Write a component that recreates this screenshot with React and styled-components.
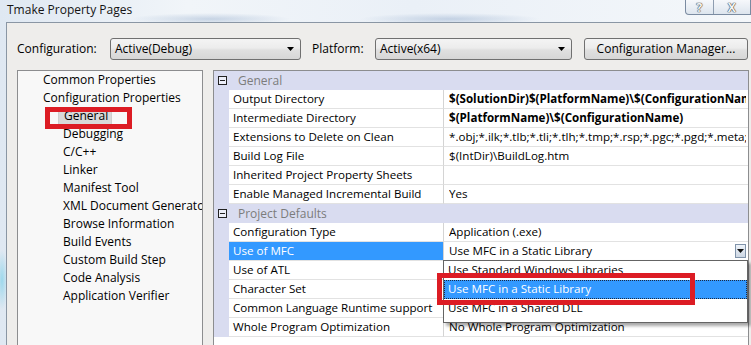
import React from 'react';
import styled, { createGlobalStyle } from 'styled-components';

const GlobalStyle = createGlobalStyle`
  html, body { margin: 0; padding: 0; background: #e8eef5; }
  body {
    font-family: "Open Sans", "Noto Sans", "DejaVu Sans", sans-serif;
    font-size: 11.6px;
    color: #000;
  }
  * { box-sizing: border-box; }
`;

const Window = styled.div`
  position: relative;
  width: 751px;
  height: 345px;
  overflow: hidden;
  display: flex;
  flex-direction: column;
  background:
    radial-gradient(ellipse 80px 6px at 210px 19px, rgba(120,150,190,0.35), transparent),
    radial-gradient(ellipse 90px 6px at 450px 19px, rgba(120,150,190,0.35), transparent),
    radial-gradient(ellipse 6px 30px at 2px 280px, rgba(90,200,230,0.5), transparent),
    linear-gradient(90deg, #dfe8f2 0%, #f1f5f9 25%, #eaf0f7 55%, #f4f7fa 100%);
`;

const TitleBar = styled.div`
  height: 22px;
  flex: none;
  display: flex;
  align-items: flex-start;
  justify-content: space-between;
`;

const Title = styled.div`
  padding: 2px 0 0 7px;
  font-size: 12px;
  line-height: 15px;
  color: #141414;
`;

const CaptionButtons = styled.div`
  display: flex;
  width: 66px;
  height: 15px;
  border: 1px solid #7a8ba1;
  border-top: none;
  border-radius: 0 0 0 4px;
  background: linear-gradient(#f6f8fb, #dde5ee);
`;

const CaptionButton = styled.div`
  width: ${p => p.$w}px;
  display: flex;
  align-items: center;
  justify-content: center;
  font-size: 12px;
  line-height: 13px;
  color: #f4f4f4;
  font-weight: 700;
  text-shadow: 0 0 1px #444, 0 0 1px #444, 0 0 1px #444;
  & + & { border-left: 1px solid #8e9db0; }
`;

const Body = styled.div`
  flex: 1;
  display: flex;
  min-height: 0;
`;

const FrameEdge = styled.div`
  width: 6px;
  flex: none;
`;

const Client = styled.div`
  flex: 1;
  min-width: 0;
  display: flex;
  flex-direction: column;
  background: #eeedeb;
  border-left: 1px solid #8a96a4;
  border-top: 1px solid #8a96a4;
  padding: 14px 0 0 10px;
`;

const Toolbar = styled.div`
  display: flex;
  align-items: center;
  height: 23px;
  flex: none;
  font-size: 12px;
`;

const Label = styled.span`
  width: ${p => p.$w}px;
  margin-left: ${p => p.$ml || 0}px;
  flex: none;
  white-space: nowrap;
`;

const Combo = styled.div`
  width: ${p => p.$w}px;
  flex: none;
  height: 22px;
  border: 1px solid #707070;
  border-radius: 3px;
  background: linear-gradient(#f4f4f4, #ececec 45%, #e0e0e0 55%, #d6d6d6);
  display: flex;
  align-items: center;
  justify-content: space-between;
  padding: 0 6px 0 4px;
`;

const PushButton = styled.div`
  width: ${p => p.$w}px;
  margin-left: ${p => p.$ml || 0}px;
  flex: none;
  height: 22px;
  border: 1px solid #707070;
  border-radius: 3px;
  background: linear-gradient(#f4f4f4, #ececec 45%, #e0e0e0 55%, #d6d6d6);
  display: flex;
  align-items: center;
  justify-content: center;
`;

const Arrow = ({ color = '#000' }) => (
  <svg width="7" height="4" viewBox="0 0 7 4">
    <path d="M0 0h7L3.5 4z" fill={color} />
  </svg>
);

const Panes = styled.div`
  flex: 1;
  min-height: 0;
  display: flex;
  gap: 10px;
  margin-top: 10px;
`;

const TreePane = styled.div`
  width: 186px;
  flex: none;
  border: 1px solid #8c8d8f;
  border-bottom: none;
  background: #f8f8f8;
  overflow: hidden;
  font-size: 12px;
`;

const TreeItem = styled.div`
  height: 18px;
  line-height: 18px;
  white-space: nowrap;
  padding-left: ${p => 25 + p.$level * 20}px;
`;

const TreeSel = styled.span`
  display: inline-block;
  margin-left: -5px;
  padding: 0 3px 0 5px;
  background: #d9d9d9;
  border: 1px solid #cfcfcf;
  line-height: 16px;
`;

const Grid = styled.div`
  width: 536px;
  flex: none;
  border: 1px solid #8c8d8f;
  border-bottom: none;
  background: #fff;
  overflow: hidden;
  display: flex;
  flex-direction: column;
`;

const CategoryRow = styled.div`
  height: 19px;
  display: flex;
  align-items: center;
  background: #d9dcf0;
  color: #7c7c7c;
  font-size: 12px;
  flex: none;
`;

const Expander = styled.span`
  position: relative;
  width: 9px;
  height: 9px;
  margin: 0 11px 0 4px;
  border: 1px solid #222;
  background: #eceef8;
  flex: none;
  &::after {
    content: '';
    position: absolute;
    left: 1px;
    right: 1px;
    top: 3px;
    height: 1px;
    background: #222;
  }
`;

const Row = styled.div`
  height: 19px;
  flex: none;
  display: grid;
  grid-template-columns: 15px 215px 1fr;
`;

const Strip = styled.div`
  background: #d9dcf0;
`;

const NameCell = styled.div`
  border-bottom: 1px solid #e2e2e2;
  border-right: 1px solid #d4d4d4;
  padding-left: 4px;
  line-height: 18px;
  white-space: nowrap;
  overflow: hidden;
  background: ${p => (p.$sel ? '#3399ff' : '#fff')};
  color: ${p => (p.$sel ? '#fff' : '#000')};
`;

const ValueCell = styled.div`
  border-bottom: 1px solid #e2e2e2;
  padding-left: 5px;
  padding-right: 2px;
  line-height: 18px;
  white-space: nowrap;
  overflow: hidden;
  font-weight: ${p => (p.$bold ? 700 : 400)};
  display: flex;
  align-items: center;
`;

const ValueText = styled.span`
  flex: 1;
  overflow: hidden;
`;

const DropButton = styled.span`
  width: 11px;
  height: 14px;
  flex: none;
  border: 1px solid #8093aa;
  background: linear-gradient(#eef3f9, #cdd7e3);
  display: flex;
  align-items: center;
  justify-content: center;
`;

const DropList = styled.div`
  position: absolute;
  left: 443px;
  top: 260px;
  width: 305px;
  height: 63px;
  background: #fff;
  border: 1px solid #646464;
  box-shadow: 3px 3px 3px rgba(0, 0, 0, 0.35);
`;

const ListItem = styled.div`
  height: 19px;
  line-height: 18px;
  padding-left: 4px;
  white-space: nowrap;
  background: ${p => (p.$sel ? '#3399ff' : 'transparent')};
  color: ${p => (p.$sel ? '#fff' : '#000')};
  outline: ${p => (p.$sel ? '1px dotted #1b2a44' : 'none')};
  outline-offset: -1px;
`;

const RedMark = styled.div`
  position: absolute;
  left: ${p => p.$x}px;
  top: ${p => p.$y}px;
  width: ${p => p.$w}px;
  height: ${p => p.$h}px;
  border: 5px solid #dc1c24;
`;

const treeItems = [
  { t: 'Common Properties', l: 0 },
  { t: 'Configuration Properties', l: 0 },
  { t: 'General', l: 1, sel: true },
  { t: 'Debugging', l: 1 },
  { t: 'C/C++', l: 1 },
  { t: 'Linker', l: 1 },
  { t: 'Manifest Tool', l: 1 },
  { t: 'XML Document Generator', l: 1 },
  { t: 'Browse Information', l: 1 },
  { t: 'Build Events', l: 1 },
  { t: 'Custom Build Step', l: 1 },
  { t: 'Code Analysis', l: 1 },
  { t: 'Application Verifier', l: 1 },
];

const sections = [
  {
    title: 'General',
    rows: [
      { n: 'Output Directory', v: '$(SolutionDir)$(PlatformName)\\$(ConfigurationName)\\', b: true },
      { n: 'Intermediate Directory', v: '$(PlatformName)\\$(ConfigurationName)', b: true },
      { n: 'Extensions to Delete on Clean', v: '*.obj;*.ilk;*.tlb;*.tli;*.tlh;*.tmp;*.rsp;*.pgc;*.pgd;*.meta;$(TargetPath)' },
      { n: 'Build Log File', v: '$(IntDir)\\BuildLog.htm' },
      { n: 'Inherited Project Property Sheets', v: '' },
      { n: 'Enable Managed Incremental Build', v: 'Yes' },
    ],
  },
  {
    title: 'Project Defaults',
    rows: [
      { n: 'Configuration Type', v: 'Application (.exe)' },
      { n: 'Use of MFC', v: 'Use MFC in a Static Library', sel: true },
      { n: 'Use of ATL', v: 'Not Using ATL' },
      { n: 'Character Set', v: 'Use Multi-Byte Character Set' },
      { n: 'Common Language Runtime support', v: 'No Common Language Runtime support' },
      { n: 'Whole Program Optimization', v: 'No Whole Program Optimization' },
    ],
  },
];

export default function App() {
  return (
    <>
      <GlobalStyle />
      <Window>
        <TitleBar>
          <Title>Tmake Property Pages</Title>
          <CaptionButtons>
            <CaptionButton $w={27}>?</CaptionButton>
            <CaptionButton $w={38}>X</CaptionButton>
          </CaptionButtons>
        </TitleBar>
        <Body>
          <FrameEdge />
          <Client>
            <Toolbar>
              <Label $w={93}>Configuration:</Label>
              <Combo $w={191}>
                <span>Active(Debug)</span>
                <Arrow />
              </Combo>
              <Label $w={63} $ml={11}>Platform:</Label>
              <Combo $w={197}>
                <span>Active(x64)</span>
                <Arrow />
              </Combo>
              <PushButton $w={164} $ml={12}>Configuration Manager...</PushButton>
            </Toolbar>
            <Panes>
              <TreePane>
                {treeItems.map(it => (
                  <TreeItem key={it.t} $level={it.l}>
                    {it.sel ? <TreeSel>{it.t}</TreeSel> : it.t}
                  </TreeItem>
                ))}
              </TreePane>
              <Grid>
                {sections.map(sec => (
                  <React.Fragment key={sec.title}>
                    <CategoryRow>
                      <Expander />
                      {sec.title}
                    </CategoryRow>
                    {sec.rows.map(r => (
                      <Row key={r.n}>
                        <Strip />
                        <NameCell $sel={r.sel}>{r.n}</NameCell>
                        <ValueCell $bold={r.b}>
                          <ValueText>{r.v}</ValueText>
                          {r.sel && (
                            <DropButton>
                              <Arrow color="#111" />
                            </DropButton>
                          )}
                        </ValueCell>
                      </Row>
                    ))}
                  </React.Fragment>
                ))}
              </Grid>
            </Panes>
          </Client>
        </Body>
        <DropList>
          <ListItem>Use Standard Windows Libraries</ListItem>
          <ListItem $sel>Use MFC in a Static Library</ListItem>
          <ListItem>Use MFC in a Shared DLL</ListItem>
        </DropList>
        <RedMark $x={45} $y={107} $w={87} $h={22} />
        <RedMark $x={437} $y={273} $w={258} $h={32} />
      </Window>
    </>
  );
}
